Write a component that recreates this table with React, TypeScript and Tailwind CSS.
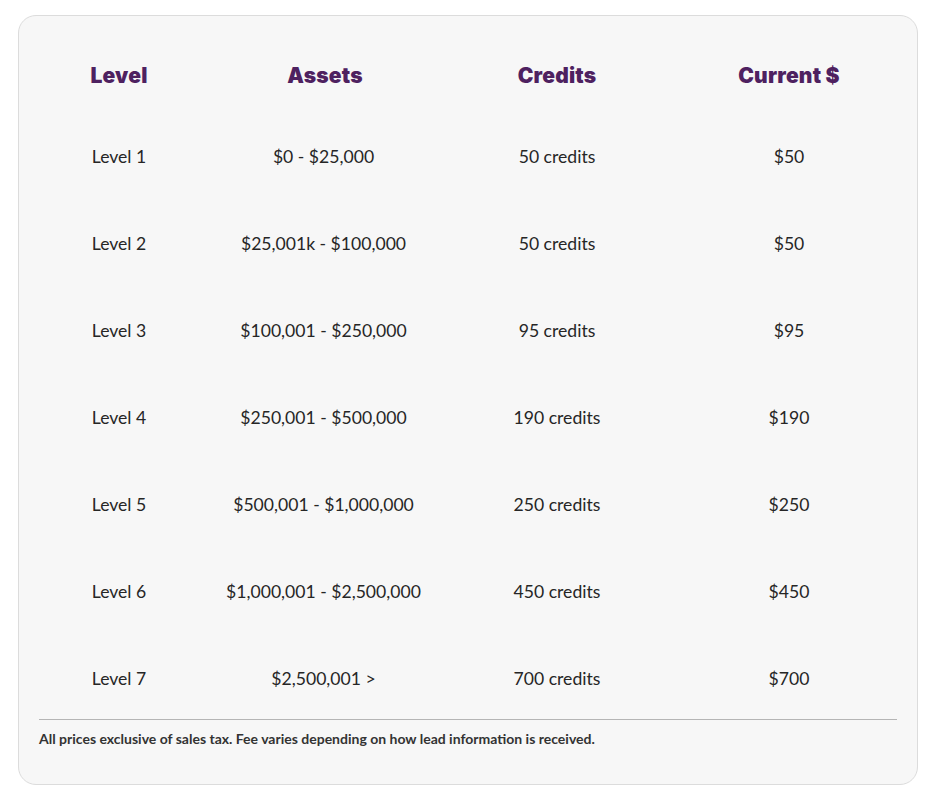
const rows = [
  { level: "Level 1", assets: "$0 - $25,000", credits: "50 credits", price: "$50" },
  { level: "Level 2", assets: "$25,001k - $100,000", credits: "50 credits", price: "$50" },
  { level: "Level 3", assets: "$100,001 - $250,000", credits: "95 credits", price: "$95" },
  { level: "Level 4", assets: "$250,001 - $500,000", credits: "190 credits", price: "$190" },
  { level: "Level 5", assets: "$500,001 - $1,000,000", credits: "250 credits", price: "$250" },
  { level: "Level 6", assets: "$1,000,001 - $2,500,000", credits: "450 credits", price: "$450" },
  { level: "Level 7", assets: "$2,500,001 >", credits: "700 credits", price: "$700" },
]

const cols = "grid grid-cols-[160px_252px_212px_252px]"

export default function App() {
  return (
    <div className="min-h-screen bg-white pt-[15px] pl-[18px] font-['Lato','Liberation_Sans',sans-serif]">
      <div className="w-[900px] rounded-[18px] border border-[#dcdcdc] bg-[#f7f7f7] px-[20px] pt-[30px] pb-[36px]">
        {/* Header */}
        <div className={`${cols} h-[60px] items-center text-center font-['Inter',sans-serif] text-[21px] font-black tracking-[0.2px] text-[#4e2160]`}>
          <div>Level</div>
          <div>Assets</div>
          <div>Credits</div>
          <div>Current $</div>
        </div>

        {/* Rows */}
        <div className="mt-[8px]">
          {rows.map((r) => (
            <div key={r.level} className={`${cols} h-[87px] last:h-[83px] last:pt-[3px] items-center text-center text-[17.6px] text-[#262626]`}>
              <div>{r.level}</div>
              <div className="-ml-[3px]">{r.assets}</div>
              <div>{r.credits}</div>
              <div>{r.price}</div>
            </div>
          ))}
        </div>

        {/* Footer */}
        <div className="border-t border-[#b5b5b5] pt-[10px]">
          <p className="text-[14px] font-bold leading-[18px] text-[#333]">
            All prices exclusive of sales tax. Fee varies depending on how lead information is received.
          </p>
        </div>
      </div>
    </div>
  )
}
